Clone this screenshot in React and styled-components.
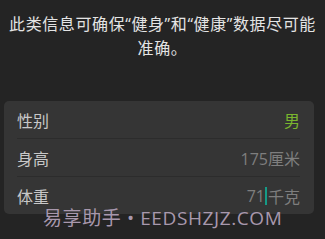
import React from 'react'
import styled, { createGlobalStyle } from 'styled-components'

const GlobalStyle = createGlobalStyle`
  html, body {
    margin: 0;
    padding: 0;
    background: #242424;
  }
  body {
    font-family: "Open Sans", "Noto Sans CJK SC", sans-serif;
  }
`

const Page = styled.div`
  position: relative;
  width: 325px;
  height: 239px;
  background: #242424;
  overflow: hidden;
  padding-top: 12px;
  box-sizing: border-box;
`

const Intro = styled.p`
  margin: 0;
  padding: 0;
  text-align: center;
  color: #e4e4e4;
  font-size: 16px;
  line-height: 24px;
  letter-spacing: 0.6px;
  white-space: nowrap;
`

const Card = styled.div`
  margin: 41px 11px 0 4px;
  background: #353535;
  border-radius: 5px;
  padding: 0 14px 0 13px;
`

const Row = styled.div`
  display: flex;
  justify-content: space-between;
  align-items: center;
  height: 37px;
  border-top: ${(p) => (p.first ? 'none' : '1px solid #2c2c2c')};
  font-size: 16px;
`

const Label = styled.span`
  color: #c8c8c8;
`

const Value = styled.span`
  color: ${(p) => (p.accent ? '#7ab52e' : '#7e7e7e')};
  display: flex;
  align-items: center;
`

const Cursor = styled.span`
  display: inline-block;
  width: 2px;
  height: 18px;
  background: #169a86;
  margin: 0 1px 0 0;
`

const Watermark = styled.div`
  position: absolute;
  left: 43px;
  top: 206px;
  color: #a898ad;
  font-size: 19px;
  line-height: 24px;
  letter-spacing: 0.6px;
  white-space: nowrap;
`

export default function App() {
  return (
    <>
      <GlobalStyle />
      <Page>
        <Intro>
          此类信息可确保“健身”和“健康”数据尽可能
          <br />
          准确。
        </Intro>
        <Card>
          <Row first>
            <Label>性别</Label>
            <Value accent>男</Value>
          </Row>
          <Row>
            <Label>身高</Label>
            <Value>175厘米</Value>
          </Row>
          <Row>
            <Label>体重</Label>
            <Value>
              71
              <Cursor />
              千克
            </Value>
          </Row>
        </Card>
        <Watermark>易享助手 • EEDSHZJZ.COM</Watermark>
      </Page>
    </>
  )
}
